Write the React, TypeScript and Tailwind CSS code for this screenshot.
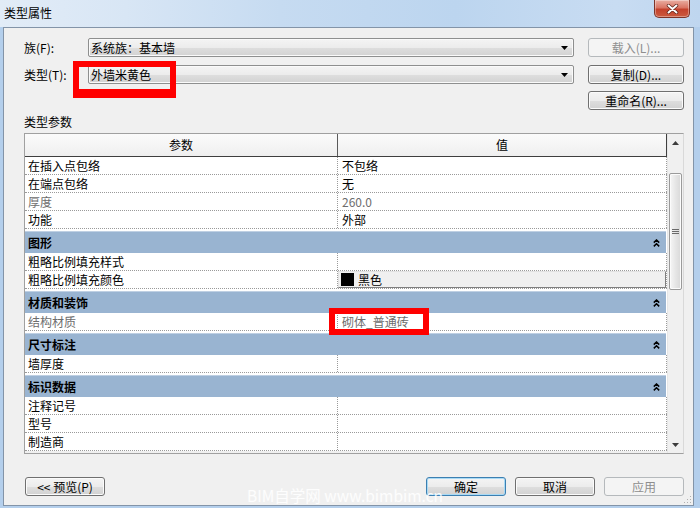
import React from "react";

const F = "font-['Noto_Sans_CJK_SC','Liberation_Sans',sans-serif]";

const BTN_BG =
  "bg-[linear-gradient(to_bottom,#f4f4f4_0%,#ececec_50%,#dedede_51%,#d2d2d2_100%)]";

function DownTri({ color = "#000" }: { color?: string }) {
  return (
    <svg width="7" height="4" viewBox="0 0 7 4">
      <path d="M0 0H7L3.5 4Z" fill={color} />
    </svg>
  );
}

function UpTri({ color = "#3c3c3c" }: { color?: string }) {
  return (
    <svg width="7" height="4" viewBox="0 0 7 4">
      <path d="M0 4H7L3.5 0Z" fill={color} />
    </svg>
  );
}

function Combo({ value }: { value: string }) {
  return (
    <div
      className={`w-[486px] h-[19px] flex items-center justify-between rounded-[2px] border border-[#8e8f8f] ${BTN_BG} shadow-[inset_0_0_0_1px_#fafafa] pl-[2px] pr-[5px]`}
    >
      <span className="leading-none">{value}</span>
      <DownTri />
    </div>
  );
}

function Btn({
  children,
  className = "",
  disabled = false,
  focused = false,
}: {
  children: React.ReactNode;
  className?: string;
  disabled?: boolean;
  focused?: boolean;
}) {
  const base =
    "h-[19px] flex items-center justify-center rounded-[3px] border leading-none";
  const look = disabled
    ? "border-[#b5b9bc] bg-[#f4f4f4] text-[#8e8e8e]"
    : focused
    ? `border-[#3c7fb1] ${BTN_BG} shadow-[inset_0_0_0_1px_#a9daf5] text-black`
    : `border-[#707070] ${BTN_BG} shadow-[inset_0_0_0_1px_#fbfbfb] text-black`;
  return <div className={`${base} ${look} ${className}`}>{children}</div>;
}

function DoubleChevron() {
  return (
    <svg width="7" height="8" viewBox="0 0 7 8">
      <path
        d="M0.8 3.6L3.5 1L6.2 3.6M0.8 7.4L3.5 4.8L6.2 7.4"
        fill="none"
        stroke="#000"
        strokeWidth="1.5"
      />
    </svg>
  );
}

type Item =
  | { t: "row"; name: string; value?: string; grey?: boolean; color?: boolean }
  | { t: "group"; name: string };

const items: Item[] = [
  { t: "row", name: "在插入点包络", value: "不包络" },
  { t: "row", name: "在端点包络", value: "无" },
  { t: "row", name: "厚度", value: "260.0", grey: true },
  { t: "row", name: "功能", value: "外部" },
  { t: "group", name: "图形" },
  { t: "row", name: "粗略比例填充样式" },
  { t: "row", name: "粗略比例填充颜色", value: "黑色", color: true },
  { t: "group", name: "材质和装饰" },
  { t: "row", name: "结构材质", value: "砌体_普通砖", grey: true },
  { t: "group", name: "尺寸标注" },
  { t: "row", name: "墙厚度" },
  { t: "group", name: "标识数据" },
  { t: "row", name: "注释记号" },
  { t: "row", name: "型号" },
  { t: "row", name: "制造商" },
];

function TableRow({ item }: { item: Item }) {
  if (item.t === "group") {
    return (
      <div className="h-[24px] flex flex-col bg-white">
        <div className="h-[2px]" />
        <div className="h-[22px] flex items-center justify-between bg-[#99b4d1] border-t border-[#bfd0e3] pl-[3px] pr-[6px] mr-[1px]">
          <span className="font-bold leading-none">{item.name}</span>
          <DoubleChevron />
        </div>
      </div>
    );
  }
  const txt = item.grey ? "text-[#6d6d6d]" : "text-black";
  return (
    <div className="h-[18px] flex bg-white border-b border-dotted border-[#9a9a9a]">
      <div
        className={`w-[313px] h-full flex items-center pl-[3px] border-r border-dotted border-[#9a9a9a] ${txt}`}
      >
        <span className="leading-none">{item.name}</span>
      </div>
      <div className="w-[329px] h-full flex items-center border-r border-dotted border-[#9a9a9a]">
        {item.color ? (
          <div className="w-full h-full flex items-center gap-[4px] pl-[2px] bg-[#f0f0f0] border border-t-[#e2e2e2] border-l-[#e2e2e2] border-r-[#7f7f7f] border-b-[#7f7f7f]">
            <div className="w-[13px] h-[13px] bg-black" />
            <span className="leading-none">{item.value}</span>
          </div>
        ) : (
          <span className={`leading-none pl-[4px] ${txt}`}>{item.value}</span>
        )}
      </div>
    </div>
  );
}

function Scrollbar() {
  return (
    <div className="w-[16px] h-full flex flex-col bg-[#f0f0f0] border-l border-[#e6e6e6]">
      <div className="h-[17px] flex items-center justify-center">
        <UpTri />
      </div>
      <div className="h-[22px]" />
      <div className="h-[117px] mx-[1px] rounded-[2px] border border-[#9a9a9a] bg-[linear-gradient(90deg,#f6f6f6_0%,#e6e6e6_50%,#d8d8d8_100%)] shadow-[inset_0_0_0_1px_#fbfbfb] flex items-center justify-center">
        <svg width="7" height="6" viewBox="0 0 7 6">
          <path d="M0 0.5H7M0 2.5H7M0 4.5H7" stroke="#6a6a6a" strokeWidth="1" />
        </svg>
      </div>
      <div className="flex-1" />
      <div className="h-[17px] flex items-center justify-center">
        <DownTri color="#3c3c3c" />
      </div>
    </div>
  );
}

function CloseBtn() {
  return (
    <div className="mr-[10px] w-[36px] h-[18px] rounded-b-[5px] border border-t-0 border-[#7d3328] bg-[linear-gradient(to_bottom,#e9aea2_0%,#da7564_45%,#c4412c_55%,#cb5a3f_100%)] shadow-[inset_0_0_0_1px_rgba(255,255,255,0.35)] flex items-center justify-center">
      <svg width="13" height="10" viewBox="0 0 13 10">
        <path
          d="M2.5 1.5L10.5 8.5M10.5 1.5L2.5 8.5"
          stroke="#5a2017"
          strokeWidth="3.4"
          strokeLinecap="round"
        />
        <path
          d="M2.5 1.5L10.5 8.5M10.5 1.5L2.5 8.5"
          stroke="#fff"
          strokeWidth="2"
          strokeLinecap="round"
        />
      </svg>
    </div>
  );
}

export default function App() {
  return (
    <div
      className={`relative w-[700px] h-[508px] overflow-hidden bg-[#b4cfec] ${F} text-[12px] text-black`}
    >
      {/* title bar */}
      <div className="h-[27px] flex items-start bg-[linear-gradient(90deg,#e2ecf7_0%,#d8e6f5_18%,#c6dbf1_40%,#bcd5ef_65%,#c8dcf2_88%,#bfd6ef_100%)]">
        <div className="pl-[4px] pt-[6px] leading-[14px]">类型属性</div>
        <div className="flex-1" />
        <CloseBtn />
      </div>

      <div className="flex">
        <div className="w-[3px]" />
        <div className="relative w-[691px] h-[479px] border border-[#8394a8] bg-[#f0f0f0] pl-[20px] pr-[9px] pt-[10px] flex flex-col">
          {/* row 1 */}
          <div className="h-[19px] flex items-center">
            <div className="w-[64px] leading-none">族(F):</div>
            <Combo value="系统族：基本墙" />
            <Btn className="ml-[14px] w-[96px]" disabled>
              载入(L)...
            </Btn>
          </div>
          {/* row 2 */}
          <div className="mt-[8px] h-[19px] flex items-center">
            <div className="w-[64px] leading-none">类型(T):</div>
            <Combo value="外墙米黄色" />
            <Btn className="ml-[14px] w-[96px]">复制(D)...</Btn>
          </div>
          {/* row 3 */}
          <div className="mt-[7px] h-[19px] flex justify-end">
            <Btn className="w-[96px]">重命名(R)...</Btn>
          </div>

          <div className="mt-[4px] h-[16px] flex items-center leading-none">
            类型参数
          </div>

          {/* table */}
          <div className="mt-[3px] h-[321px] w-[660px] flex border border-[#a0a0a0] border-r-[#d9d9d9]">
            <div className="w-[642px] h-full flex flex-col bg-[#f0f0f0]">
              <div className="h-[23px] flex bg-[linear-gradient(to_bottom,#fbfbfb,#efefef)] border-b border-[#3f3f3f]">
                <div className="w-[313px] h-full flex items-center justify-center border-r border-[#5a5a5a]">
                  参数
                </div>
                <div className="w-[329px] h-full flex items-center justify-center border-r border-[#3f3f3f]">
                  值
                </div>
              </div>
              {items.map((it, i) => (
                <TableRow key={i} item={it} />
              ))}
            </div>
            <Scrollbar />
          </div>

          {/* bottom buttons */}
          <div className="mt-[23px] flex">
            <Btn className="ml-[1px] w-[80px]">&lt;&lt; 预览(P)</Btn>
            <div className="flex-1" />
            <div className="flex gap-[9px]">
              <Btn className="w-[80px]" focused>
                确定
              </Btn>
              <Btn className="w-[80px]">取消</Btn>
              <Btn className="w-[80px]" disabled>
                应用
              </Btn>
            </div>
          </div>

          {/* resize grip */}
          <svg
            className="absolute right-[1px] bottom-[1px]"
            width="8"
            height="8"
            viewBox="0 0 8 8"
          >
            <g fill="#b0b0b0">
              <rect x="6" y="0" width="1" height="1" />
              <rect x="3" y="3" width="1" height="1" />
              <rect x="6" y="3" width="1" height="1" />
              <rect x="0" y="6" width="1" height="1" />
              <rect x="3" y="6" width="1" height="1" />
              <rect x="6" y="6" width="1" height="1" />
            </g>
          </svg>
        </div>
      </div>

      {/* annotations */}
      <div className="absolute left-[73px] top-[61px] w-[103px] h-[37px] border-[6px] border-b-[9px] border-[#ff0000]" />
      <div className="absolute left-[329px] top-[308px] w-[100px] h-[27px] border-[6px] border-[#ff0000]" />

      {/* watermark */}
      <div className="absolute left-[247px] top-[485px] text-[15.5px] leading-[20px] text-white/85 whitespace-nowrap">
        BIM自学网 www.bimbim.cn
      </div>
    </div>
  );
}
